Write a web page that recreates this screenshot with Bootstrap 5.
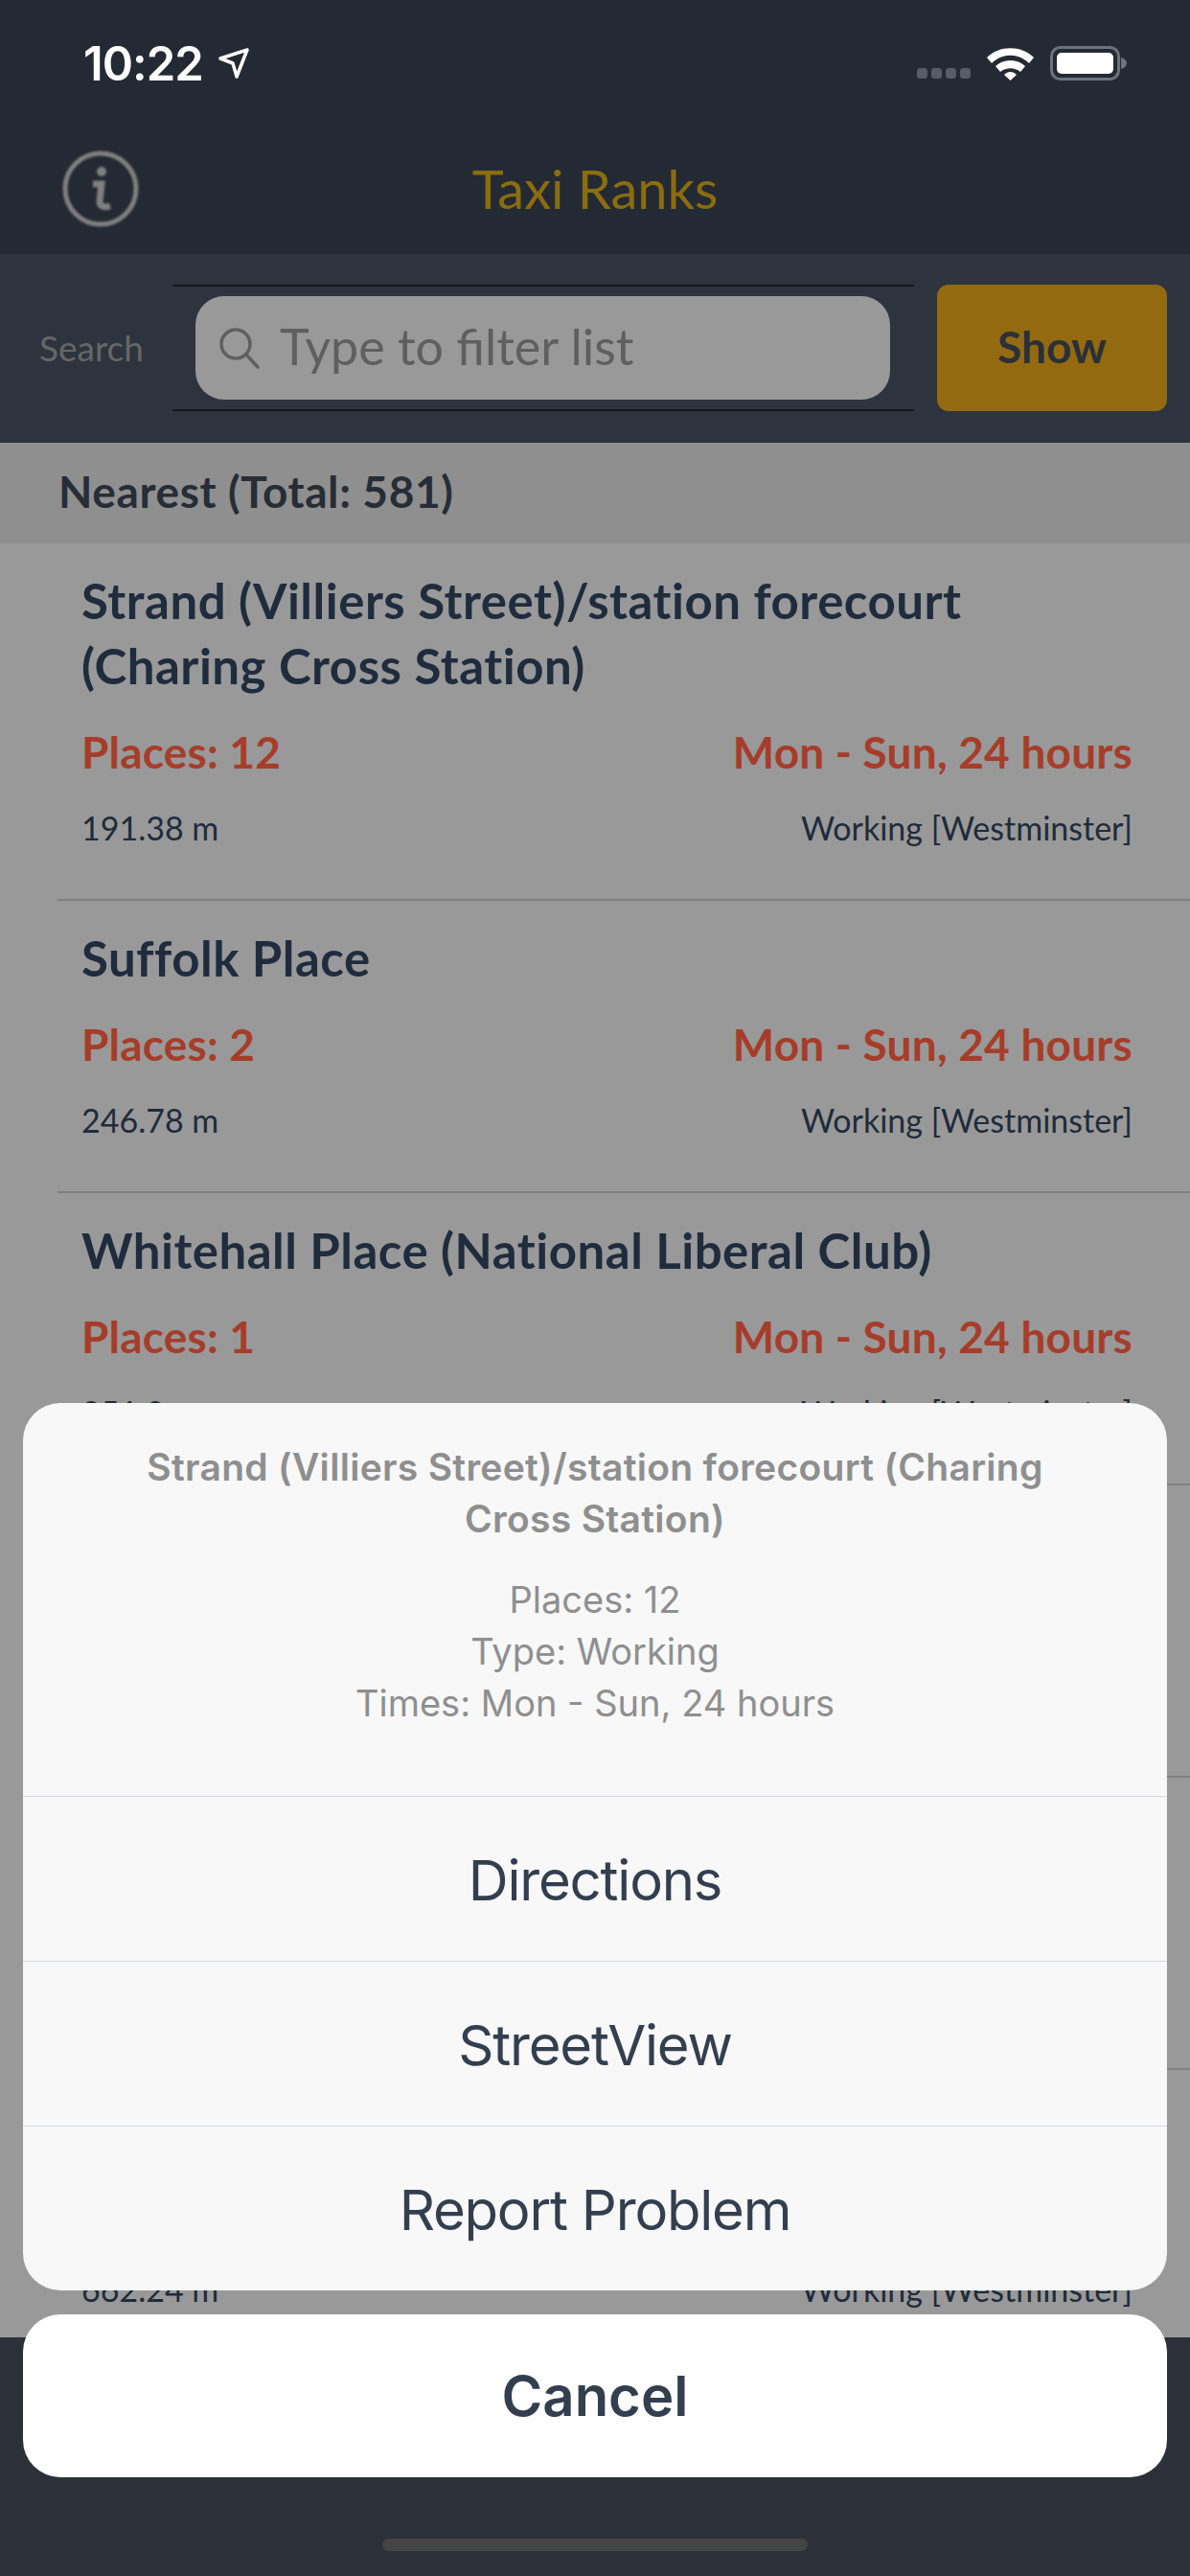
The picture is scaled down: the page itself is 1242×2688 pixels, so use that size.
<!DOCTYPE html>
<html lang="en">
<head>
    <meta charset="UTF-8">
    <title>Taxi Ranks</title>
    <link href="https://cdn.jsdelivr.net/npm/bootstrap@5.3.0/dist/css/bootstrap.min.css" rel="stylesheet">
    <style>
    body { background: #2c3038; }
    .screen { position: relative; width: 1242px; height: 2688px; overflow: hidden; font-family: "Lato", sans-serif; }

    .top-area { background: #232a33; height: 265px; }
    .status-row { height: 132px; padding: 0 65px 0 87px; }
    .clock { font-family: "Inter", sans-serif; font-weight: 600; font-size: 49px; line-height: 1; color: #fff; letter-spacing: -1px; }
    .nav-row { height: 133px; position: relative; }
    .info-btn { position: absolute; left: 65px; top: 25px; width: 80px; height: 80px; filter: blur(1px); }
    .nav-title { font-size: 56px; line-height: 1; color: #8b6c0f; margin-top: -4px; }

    .search-area { background: #2d343d; height: 197px; padding: 32px 24px 33px 41px; }
    .search-label { font-size: 37px; color: #666; width: 139px; }
    .search-wrap { width: 774px; height: 132px; border-top: 2px solid #14181e; border-bottom: 2px solid #14181e; padding: 0 25px 0 24px; }
    .search-field { background: #999; height: 108px; border-radius: 30px; padding-left: 24px; gap: 20px; font-size: 52px; color: #5f5f5f; }
    .search-field span { margin-top: -4px; }
    .show-btn { width: 240px; height: 132px; margin-left: 24px; background: #946a10; color: #2a3038; font-size: 46px; font-weight: 700; border-radius: 12px; border: 0; padding-bottom: 4px; }

    .section-head { background: #8f8f8f; height: 105px; padding: 0 0 5px 61px; font-size: 46px; letter-spacing: .6px; font-weight: 700; color: #272d36; }

    .rank-list { background: #999; height: 1872px; overflow: hidden; }
    .rank-row { margin-left: 60px; padding: 26px 60px 0 25px; border-bottom: 2px solid #808080; height: 305px; }
    .rank-row.two-line { height: 373px; }
    .rank-name { font-size: 51px; line-height: 68px; letter-spacing: .5px; font-weight: 700; color: #1f2c3d; margin: 0; }
    .rank-info { font-size: 46px; line-height: 56px; letter-spacing: .2px; font-weight: 700; color: #a63d2a; margin-top: 28px; }
    .rank-meta { font-size: 34px; line-height: 44px; color: #1f2b3a; margin-top: 29px; }

    .bottom-area { height: 249px; background: #2c3038; }
    .home-bar { position: absolute; left: 399px; top: 2649px; width: 444px; height: 13px; border-radius: 7px; background: #444; }

    .action-sheet { position: absolute; left: 24px; top: 1464px; width: 1194px; font-family: "Inter", sans-serif; }
    .sheet-group { background: #f8f8f9; border-radius: 39px; overflow: hidden; height: 926px; }
    .sheet-msg { height: 411px; padding-top: 40px; text-align: center; color: #8f8f8f; border-bottom: 1px solid #d5d9de; }
    .sheet-title { font-size: 39px; line-height: 54px; letter-spacing: .3px; font-weight: 600; padding: 0 40px; margin: 0; }
    .sheet-lines { font-size: 38px; line-height: 54px; margin-top: 30px; }
    .sheet-action { height: 172px; padding-top: 4px; font-size: 58px; letter-spacing: -1.2px; color: #333f4f; background: none; border: 0; border-bottom: 1px solid #d5d9de; width: 100%; }
    .sheet-action:last-child { border-bottom: 0; }
    .sheet-cancel { display: block; width: 100%; margin-top: 25px; height: 170px; background: #fff; border: 0; border-radius: 39px; font-size: 58px; font-weight: 600; color: #333f4f; }
    </style>
</head>
<body>
<div class="screen">
    <div class="top-area">
        <div class="status-row d-flex justify-content-between align-items-center">
            <div class="d-flex align-items-center gap-3">
                <span class="clock">10:22</span>
                <svg width="32" height="32" viewBox="0 0 32 32" fill="none" stroke="#fff" stroke-width="3.5" stroke-linejoin="round"><path d="M2 11 30 2 19 30 15 16Z"/></svg>
            </div>
            <svg width="220" height="40" viewBox="0 0 220 40">
                <g fill="#575d66">
                    <rect x="0" y="25" width="11" height="11" rx="3.5"/><rect x="15" y="25" width="11" height="11" rx="3.5"/><rect x="30" y="25" width="11" height="11" rx="3.5"/><rect x="45" y="25" width="11" height="11" rx="3.5"/>
                </g>
                <g fill="#fff">
                    <path d="M73 14C86 1 109 1 122 14L117 20C106 9 89 9 78 20Z"/>
                    <path d="M82 23C90 15 105 15 113 23L108 29C102 24 93 24 87 29Z"/>
                    <path d="M91 32C95 28 100 28 104 32L97.500 38Z"/>
                </g>
                <rect x="140.500" y="3.500" width="70" height="33" rx="9" fill="none" stroke="#6d737b" stroke-width="3"/>
                <rect x="146" y="9" width="59" height="22" rx="5" fill="#fff"/>
                <path d="M213 14C217 15 219 18 219 20 219 22 217 25 213 26Z" fill="#6d737b"/>
            </svg>
        </div>
        <div class="nav-row d-flex justify-content-center align-items-center">
            <button class="info-btn p-0 border-0 bg-transparent" type="button" aria-label="Info">
                <svg width="80" height="80" viewBox="0 0 80 80" fill="none">
                    <circle cx="40" cy="40" r="37" stroke="#808080" stroke-width="5"/>
                    <circle cx="41" cy="22" r="5" fill="#808080"/>
                    <path d="M32 35H41L39 53C39 58 43 60 50 58" stroke="#808080" stroke-width="7"/>
                </svg>
            </button>
            <span class="nav-title">Taxi Ranks</span>
        </div>
    </div>

    <div class="search-area d-flex align-items-center">
        <div class="search-label">Search</div>
        <div class="search-wrap d-flex align-items-center">
            <div class="search-field w-100 d-flex align-items-center">
                <svg width="44" height="44" viewBox="0 0 44 44" fill="none" stroke="#5f5f5f" stroke-width="3.500" stroke-linecap="round"><circle cx="18" cy="18" r="15"/><path d="M29 29 41 42"/></svg>
                <span>Type to filter list</span>
            </div>
        </div>
        <button class="show-btn" type="button">Show</button>
    </div>

    <div class="section-head d-flex align-items-center">Nearest (Total: 581)</div>

    <div class="rank-list" id="rankList"></div>

    <div class="bottom-area"></div>

    <div class="action-sheet">
        <div class="sheet-group">
            <div class="sheet-msg">
                <p class="sheet-title">Strand (Villiers Street)/station forecourt (Charing<br>Cross Station)</p>
                <div class="sheet-lines">Places: 12<br>Type: Working<br>Times: Mon - Sun, 24 hours</div>
            </div>
            <button class="sheet-action" type="button">Directions</button>
            <button class="sheet-action" type="button">StreetView</button>
            <button class="sheet-action" type="button">Report Problem</button>
        </div>
        <button class="sheet-cancel" type="button">Cancel</button>
    </div>
    <div class="home-bar"></div>
</div>
<script>
const ranks = [
    { nome: "Strand (Villiers Street)/station forecourt<br>(Charing Cross Station)", vagas: 12, dist: "191.38 m", duas: true },
    { nome: "Suffolk Place", vagas: 2, dist: "246.78 m" },
    { nome: "Whitehall Place (National Liberal Club)", vagas: 1, dist: "351.0 m" },
    { nome: "Horse Guards Avenue", vagas: 3, dist: "412.56 m" },
    { nome: "Great Scotland Yard", vagas: 2, dist: "498.10 m" },
    { nome: "Northumberland Avenue", vagas: 4, dist: "662.24 m" },
    { nome: "Craven Street", vagas: 2, dist: "701.33 m" }
];

document.getElementById("rankList").innerHTML = ranks.map(r => `
    <div class="rank-row ${r.duas ? "two-line" : ""}">
        <h5 class="rank-name">${r.nome}</h5>
        <div class="rank-info d-flex justify-content-between"><span>Places: ${r.vagas}</span><span>Mon - Sun, 24 hours</span></div>
        <div class="rank-meta d-flex justify-content-between"><span>${r.dist}</span><span>Working [Westminster]</span></div>
    </div>
`).join("");
</script>
<script src="https://cdn.jsdelivr.net/npm/bootstrap@5.3.0/dist/js/bootstrap.bundle.min.js"></script>
</body>
</html>
